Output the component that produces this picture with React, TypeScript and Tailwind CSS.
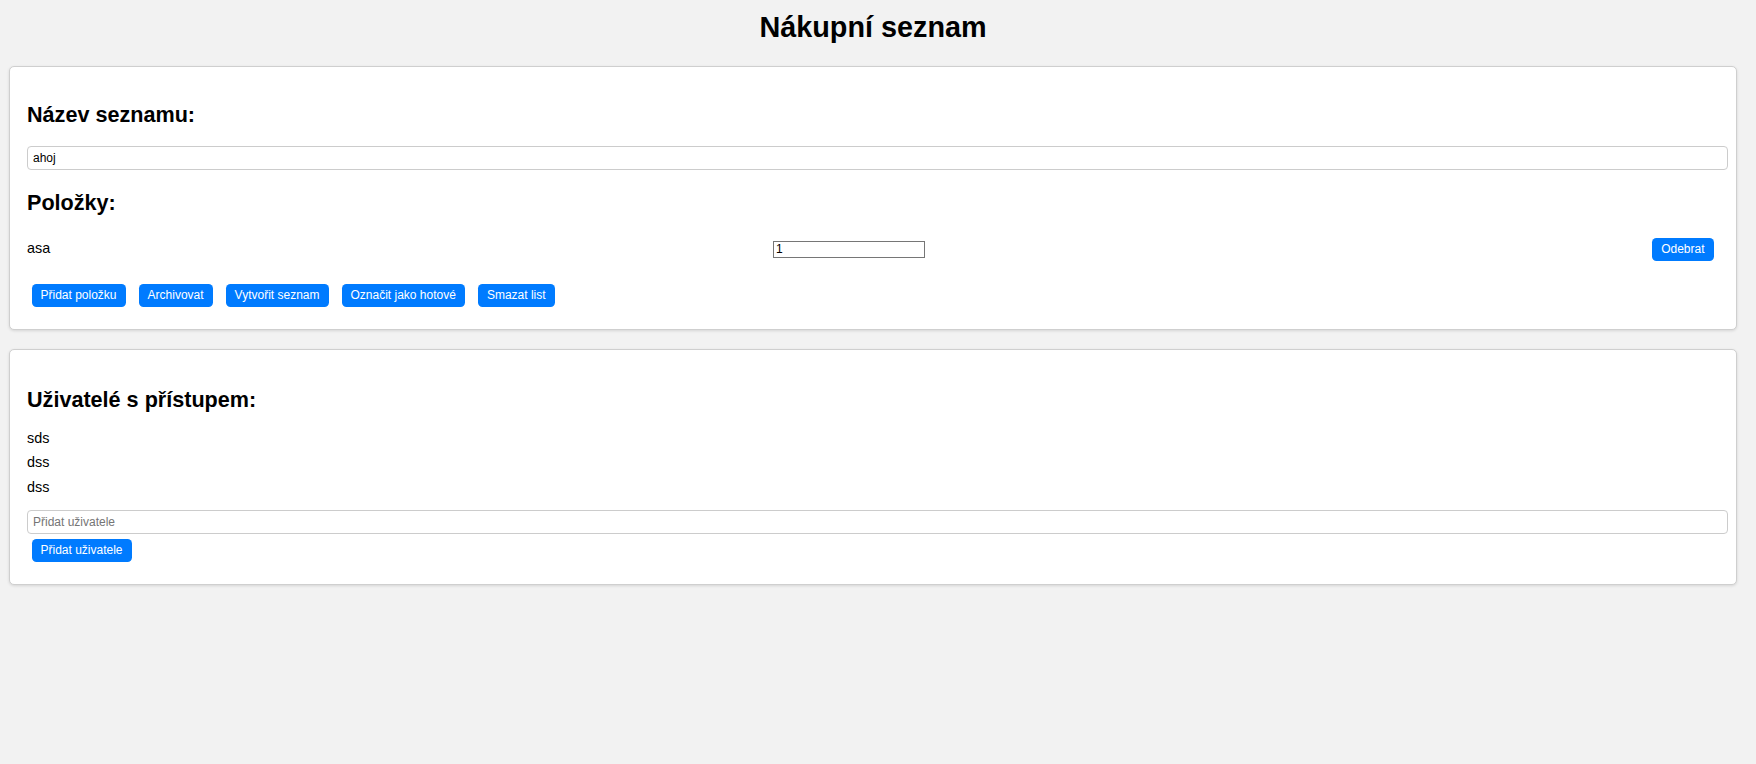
const font = { fontFamily: '"Liberation Sans", Arial, sans-serif' };

const btn =
  "h-[23px] px-[9px] rounded-[4.5px] bg-[#007bff] text-white text-[12px] leading-[23px] whitespace-nowrap";

const users = ["sds", "dss", "dss"];

const App = () => {
  return (
    <div className="min-h-screen bg-[#f2f2f2] text-black" style={font}>
      {/* Title */}
      <div className="pt-[10px] w-[1746px] text-center">
        <h1 className="text-[28.8px] leading-[34px] font-bold">Nákupní seznam</h1>
      </div>

      {/* List card */}
      <div className="mt-[22px] ml-[9px] w-[1728px] bg-white border border-[#cfcfcf] rounded-[5px] shadow-[0_1px_3px_rgba(0,0,0,0.12)] px-[17px] pt-[17px] pb-[22px]">
        <h2 className="mt-[17.5px] text-[21.6px] leading-[25px] font-bold">Název seznamu:</h2>
        <input
          className="mt-[19px] block w-[1701px] h-[24px] border border-[#cccccc] rounded-[4px] pl-[5px] text-[12px] outline-none"
          defaultValue="ahoj"
        />
        <h2 className="mt-[20px] text-[21.6px] leading-[25px] font-bold">Položky:</h2>

        <div className="mt-[18.5px] h-[32px] flex items-center justify-between">
          <span className="text-[14.4px]">asa</span>
          <input
            type="number"
            className="w-[152px] h-[17px] border border-[#767676] px-[2px] text-[12px] outline-none [appearance:textfield]"
            defaultValue={1}
          />
          <button className={btn + " ml-[4.5px] mr-[5.5px]"}>Odebrat</button>
        </div>

        <div className="mt-[19px] pl-[4.5px] flex gap-[13px]">
          <button className={btn}>Přidat položku</button>
          <button className={btn}>Archivovat</button>
          <button className={btn}>Vytvořit seznam</button>
          <button className={btn}>Označit jako hotové</button>
          <button className={btn}>Smazat list</button>
        </div>
      </div>

      {/* Users card */}
      <div className="mt-[19px] ml-[9px] w-[1728px] bg-white border border-[#cfcfcf] rounded-[5px] shadow-[0_1px_3px_rgba(0,0,0,0.12)] px-[17px] pt-[17px] pb-[22px]">
        <h2 className="mt-[19.5px] text-[21.6px] leading-[25px] font-bold">Uživatelé s přístupem:</h2>
        <div className="mt-[14px]">
          {users.map((u, i) => (
            <div key={i} className="text-[14.4px] leading-[24.7px]">
              {u}
            </div>
          ))}
        </div>
        <input
          className="mt-[10.5px] block w-[1701px] h-[24px] border border-[#cccccc] rounded-[4px] pl-[5px] text-[12px] outline-none placeholder:text-[#757575]"
          placeholder="Přidat uživatele"
        />
        <div className="mt-[4.5px] pl-[4.5px] flex">
          <button className={btn}>Přidat uživatele</button>
        </div>
      </div>
    </div>
  );
};

export default App;
